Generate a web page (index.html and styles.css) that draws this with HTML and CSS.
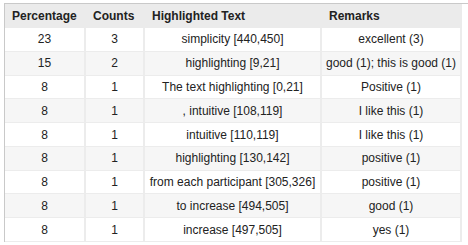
FILE: index.html
```html
<!DOCTYPE html>
<html lang="en">
<head>
    <meta charset="UTF-8">
    <title>Highlights</title>
    <link rel="stylesheet" href="styles.css">
</head>
<body>

<div class="frame">
    <table class="results">
        <colgroup>
            <col class="col-pct">
            <col class="col-count">
            <col class="col-text">
            <col class="col-remarks">
        </colgroup>
        <thead>
            <tr>
                <th>Percentage</th>
                <th>Counts</th>
                <th>Highlighted Text</th>
                <th>Remarks</th>
            </tr>
        </thead>
        <tbody>
            <tr><td>23</td><td>3</td><td>simplicity [440,450]</td><td>excellent (3)</td></tr>
            <tr><td>15</td><td>2</td><td>highlighting [9,21]</td><td>good (1); this is good (1)</td></tr>
            <tr><td>8</td><td>1</td><td>The text highlighting [0,21]</td><td>Positive (1)</td></tr>
            <tr><td>8</td><td>1</td><td>, intuitive [108,119]</td><td>I like this (1)</td></tr>
            <tr><td>8</td><td>1</td><td>intuitive [110,119]</td><td>I like this (1)</td></tr>
            <tr><td>8</td><td>1</td><td>highlighting [130,142]</td><td>positive (1)</td></tr>
            <tr><td>8</td><td>1</td><td>from each participant [305,326]</td><td>positive (1)</td></tr>
            <tr><td>8</td><td>1</td><td>to increase [494,505]</td><td>good (1)</td></tr>
            <tr><td>8</td><td>1</td><td>increase [497,505]</td><td>yes (1)</td></tr>
        </tbody>
    </table>
</div>

</body>
</html>
```

FILE: styles.css
```css
* { box-sizing: border-box; }
:root {
    --line-color: #ececec;
    --frame-color: #c9c9c9;
}
body {
    margin: 0px;
    font-family: "Liberation Sans", Arial, sans-serif;
    font-size: 12px;
    color: #222;
    background: #fff;
}
.frame {
    margin: 3px 0 0 4px;
    border-top: 1px solid var(--frame-color);
    border-left: 1px solid var(--frame-color);
}

.results {
    width: 457px;
    table-layout: fixed;
    border-collapse: separate;
    border-spacing: 0;
}
.col-pct { width: 81px; }
.col-count { width: 59px; }
.col-text { width: 177px; }
.col-remarks { width: 140px; }

.results th {
    background-color: #ebebeb;
    font-weight: bold;
    text-align: left;
    line-height: 14px;
    padding: 5px 7px 5px 7px;
    white-space: nowrap;
}
.results td {
    text-align: center;
    line-height: 14px;
    padding: 4.4px 2px 4.4px 2px;
    white-space: nowrap;
    border-right: 2px solid var(--line-color);
    border-bottom: 1px solid var(--line-color);
}
.results tbody tr:nth-child(even) td { background-color: #f6f6f6; }
```
